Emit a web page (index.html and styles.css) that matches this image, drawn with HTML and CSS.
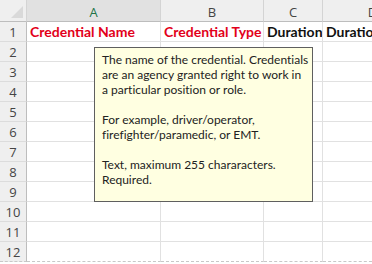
FILE: index.html
```html
<!DOCTYPE html>
<html lang="en">
  <head>
    <meta charset="UTF-8" />
    <title>Credentials</title>
    <link rel="stylesheet" href="styles.css">
  </head>
  <body>
    <div class="sheet">
      <div class="corner"><span class="corner-mark"></span></div>
      <div class="col-head selected">A</div>
      <div class="col-head">B</div>
      <div class="col-head">C</div>
      <div class="col-head">D</div>

      <div class="row-head">1</div>
      <div class="cell title">Credential Name</div>
      <div class="cell title">Credential Type</div>
      <div class="cell strong">Duration</div>
      <div class="cell strong">Duration</div>

      <div class="row-head">2</div><div class="cell"></div><div class="cell"></div><div class="cell"></div><div class="cell"></div>
      <div class="row-head">3</div><div class="cell"></div><div class="cell"></div><div class="cell"></div><div class="cell"></div>
      <div class="row-head">4</div><div class="cell"></div><div class="cell"></div><div class="cell"></div><div class="cell"></div>
      <div class="row-head">5</div><div class="cell"></div><div class="cell"></div><div class="cell"></div><div class="cell"></div>
      <div class="row-head">6</div><div class="cell"></div><div class="cell"></div><div class="cell"></div><div class="cell"></div>
      <div class="row-head">7</div><div class="cell"></div><div class="cell"></div><div class="cell"></div><div class="cell"></div>
      <div class="row-head">8</div><div class="cell"></div><div class="cell"></div><div class="cell"></div><div class="cell"></div>
      <div class="row-head">9</div><div class="cell"></div><div class="cell"></div><div class="cell"></div><div class="cell"></div>
      <div class="row-head">10</div><div class="cell"></div><div class="cell"></div><div class="cell"></div><div class="cell"></div>
      <div class="row-head">11</div><div class="cell"></div><div class="cell"></div><div class="cell"></div><div class="cell"></div>
      <div class="row-head last">12</div><div class="cell last"></div><div class="cell last"></div><div class="cell last"></div><div class="cell last"></div>
    </div>

    <div class="comment">
      <p>The name of the credential. Credentials<br>are an agency granted right to work in<br>a particular position or role.</p>
      <p>For example, driver/operator,<br>firefighter/paramedic, or EMT.</p>
      <p>Text, maximum 255 chararacters.<br>Required.</p>
    </div>
  </body>
</html>
```

FILE: styles.css
```css
body,
html {
  margin: 0;
  padding: 0;
  background: white;
  overflow: hidden;
  font-family: "Open Sans", "Noto Sans", sans-serif;
}

.sheet {
  display: grid;
  grid-template-columns: 27px 134px 103px 59px 100px;
  grid-template-rows: 22px repeat(12, 20px);
}

.corner,
.col-head,
.row-head {
  background-color: #efefef;
  color: #444;
  font-size: 13px;
  box-sizing: border-box;
  border-right: 1px solid #d4d4d4;
  border-bottom: 1px solid #bdbdbd;
}
.corner {
  position: relative;
}
.corner-mark {
  position: absolute;
  right: 3px;
  bottom: 3px;
  width: 0;
  height: 0;
  border-left: 12px solid transparent;
  border-bottom: 12px solid #d9d9d9;
}

.col-head {
  display: flex;
  align-items: center;
  justify-content: center;
  padding-top: 2px;
}
.col-head.selected {
  background-color: #e1e1e1;
  color: #217346;
}

.row-head {
  display: flex;
  align-items: center;
  justify-content: center;
  border-bottom: 1px solid #dcdcdc;
  border-right: 1px solid #bdbdbd;
}

.cell {
  box-sizing: border-box;
  border-right: 1px solid #e1e1e1;
  border-bottom: 1px solid #e1e1e1;
  font-family: Lato, "Open Sans", sans-serif;
  font-size: 14px;
  font-weight: bold;
  white-space: nowrap;
  overflow: hidden;
  padding: 0 3px;
  line-height: 20px;
}
.cell.title {
  color: #e2001a;
}
.cell.strong {
  color: #111;
}
.last {
  border-bottom: 1px dashed #c8c8c8;
}

.comment {
  position: absolute;
  left: 94px;
  top: 47px;
  width: 219px;
  height: 155px;
  box-sizing: border-box;
  background-color: #ffffe1;
  border: 1px solid #5f5f5f;
  padding: 4px 7px;
  font-family: Lato, "Open Sans", sans-serif;
  font-size: 12px;
  line-height: 15px;
  color: #222;
  white-space: nowrap;
  font-variant-ligatures: none;
}
.comment p {
  margin: 0 0 15px;
}
```
